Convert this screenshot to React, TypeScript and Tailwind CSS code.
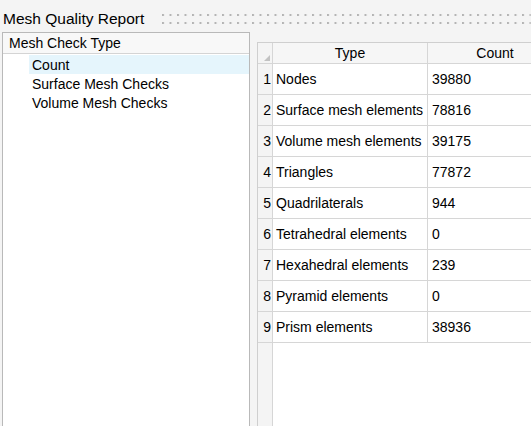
import React from "react";

/* ── Static data ───────────────────────────────────────────────────────── */

const CHECK_TYPES = ["Count", "Surface Mesh Checks", "Volume Mesh Checks"];

const ROWS: { type: string; count: string }[] = [
  { type: "Nodes", count: "39880" },
  { type: "Surface mesh elements", count: "78816" },
  { type: "Volume mesh elements", count: "39175" },
  { type: "Triangles", count: "77872" },
  { type: "Quadrilaterals", count: "944" },
  { type: "Tetrahedral elements", count: "0" },
  { type: "Hexahedral elements", count: "239" },
  { type: "Pyramid elements", count: "0" },
  { type: "Prism elements", count: "38936" },
];

/* ── Dotted drag grip next to the title ────────────────────────────────── */

function Grip() {
  return (
    <svg className="h-[12px] flex-1" preserveAspectRatio="none">
      <defs>
        <pattern id="grip" width="7.5" height="8" patternUnits="userSpaceOnUse">
          <rect x="0" y="0" width="2" height="2" fill="#b4b4b4" />
        </pattern>
      </defs>
      <rect x="0" y="0" width="100%" height="10" fill="url(#grip)" />
    </svg>
  );
}

/* ── Page ──────────────────────────────────────────────────────────────── */

export default function App() {
  return (
    <div
      className="w-[531px] h-[426px] overflow-hidden bg-[#f4f4f4] text-black text-[14px] leading-none"
      style={{ fontFamily: '"Liberation Sans", Arial, sans-serif' }}
    >
      {/* ── Title ───────────────────────────────────────── */}
      <div className="h-[32px] flex items-start pl-[3px] pt-[10px]">
        <span className="text-[15.5px] leading-[18px] mr-[18px] whitespace-nowrap">Mesh Quality Report</span>
        <div className="flex-1 pt-[4px] flex">
          <Grip />
        </div>
      </div>

      <div className="flex items-start">
        {/* ── Mesh check tree ───────────────────────────── */}
        <div className="ml-[2px] w-[248px] shrink-0 h-[420px] bg-white border border-[#b9b9b9] border-b-0">
          <div className="h-[21px] flex items-center pl-[6px] bg-[#f8f8f8] border-b border-[#d4d4d4]">
            Mesh Check Type
          </div>
          <div className="pt-[1px]">
            {CHECK_TYPES.map((label, i) => (
              <div
                key={label}
                className={`ml-[26px] h-[19px] flex items-center pl-[3px] ${i === 0 ? "bg-[#e5f5fc]" : ""}`}
              >
                {label}
              </div>
            ))}
          </div>
        </div>

        {/* ── Count table ───────────────────────────────── */}
        <div className="ml-[7px] mt-[10px] flex-1 min-w-0 h-[400px] flex bg-white border-l border-t border-[#cfcfcf]">
          <div className="w-[15px] shrink-0 bg-[#f4f4f4] border-r border-[#d6d6d6]">
            <div className="h-[21px] border-b border-[#d6d6d6] relative">
              <svg className="absolute left-[6px] top-[12px]" width="6" height="6" viewBox="0 0 6 6">
                <polygon points="6,0 6,6 0,6" fill="#c2c2c2" />
              </svg>
            </div>
            {ROWS.map((_, i) => (
              <div key={i} className="h-[31px] flex items-center justify-end pr-[1px] border-b border-[#d6d6d6]">
                {i + 1}
              </div>
            ))}
          </div>
          <div className="flex-1 min-w-0">
            <div className="h-[21px] flex bg-[#f6f6f6] border-b border-[#d6d6d6]">
              <div className="w-[155px] shrink-0 flex items-center justify-center border-r border-[#d6d6d6]">Type</div>
              <div className="w-[134px] shrink-0 flex items-center justify-center">Count</div>
            </div>
            {ROWS.map((row) => (
              <div key={row.type} className="h-[31px] flex border-b border-[#d6d6d6]">
                <div className="w-[155px] shrink-0 flex items-center pl-[3px] border-r border-[#d6d6d6] whitespace-nowrap">
                  {row.type}
                </div>
                <div className="w-[134px] shrink-0 flex items-center pl-[4px]">{row.count}</div>
              </div>
            ))}
          </div>
        </div>
      </div>
    </div>
  );
}
